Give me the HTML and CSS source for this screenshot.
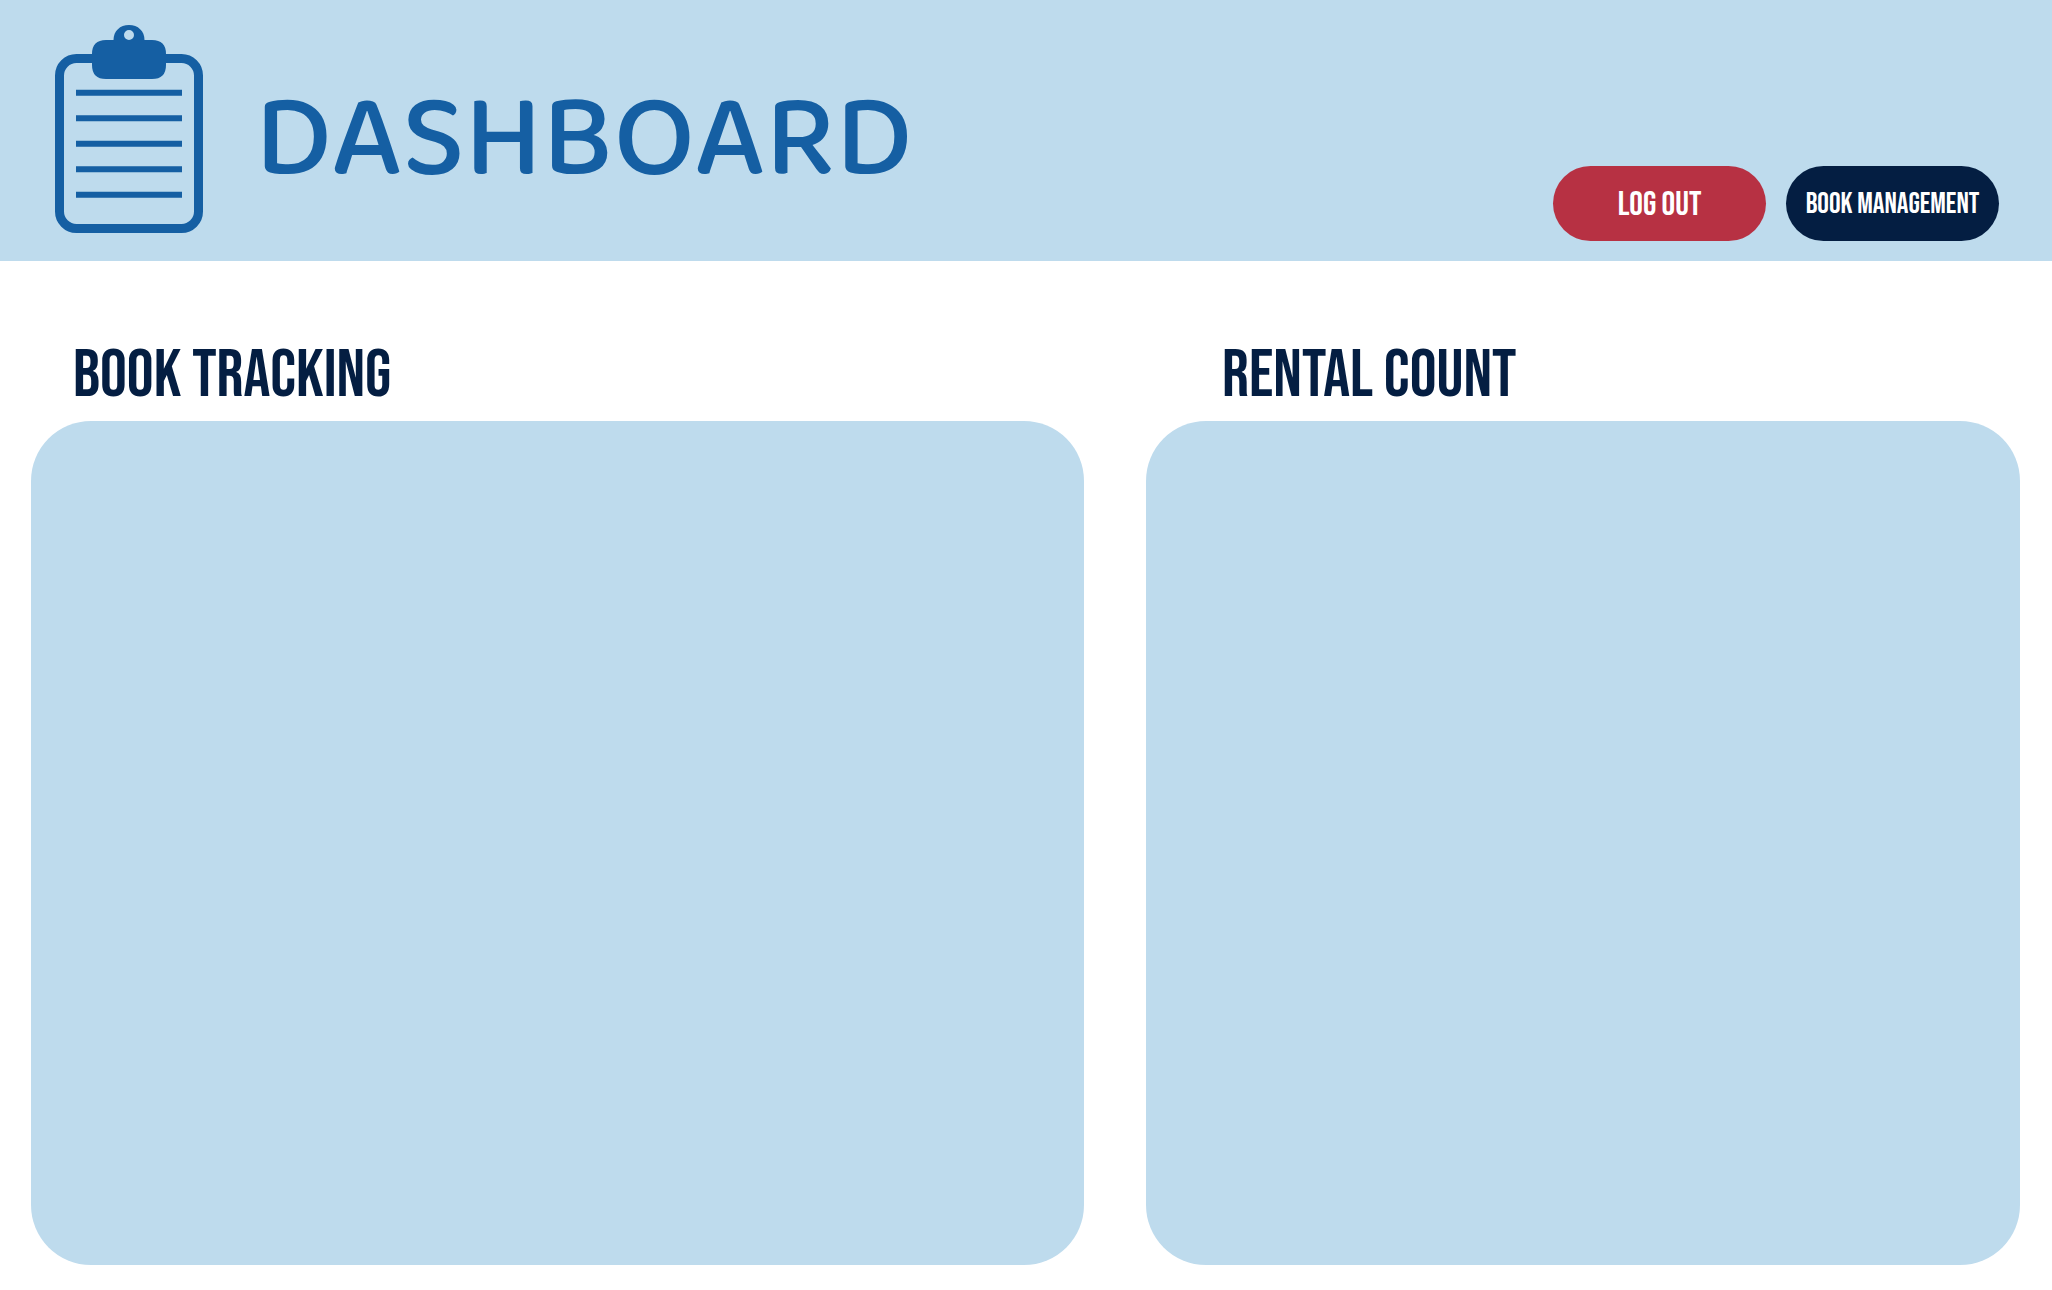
FILE: index.html
```html
<!DOCTYPE html>
<html lang="en">
<head>
  <meta charset="utf-8">
  <meta name="viewport" content="width=device-width, initial-scale=1">
  <title>Dashboard</title>
  <link rel="stylesheet" href="styles.css">
</head>
<body>
  <header class="header">
    <svg class="logo" viewBox="0 0 148 208" aria-hidden="true">
      <rect class="logo-board" x="4.500" y="33.500" width="139" height="170" rx="17"/>
      <path class="logo-clip" fill-rule="evenodd" d="M58.500 15C58.500 6 65 0 74 0S89.500 6 89.500 15H97Q111 15 111 29V40Q111 54 97 54H51Q37 54 37 40V29Q37 15 51 15ZM74 5A5 5 0 1 0 74 15A5 5 0 1 0 74 5Z"/>
      <path class="logo-lines" d="M21 67.700H127M21 93.200H127M21 118.700H127M21 144.200H127M21 169.700H127"/>
    </svg>
    <h1 class="title">DASHBOARD</h1>
    <nav class="actions">
      <button class="button button-logout" type="button">LOG OUT</button>
      <button class="button button-books" type="button">BOOK MANAGEMENT</button>
    </nav>
  </header>
  <main class="content">
    <section class="section" aria-labelledby="tracking">
      <h2 class="heading" id="tracking">BOOK TRACKING</h2>
      <div class="panel"></div>
    </section>
    <section class="section" aria-labelledby="rental">
      <h2 class="heading heading-rental" id="rental">RENTAL COUNT</h2>
      <div class="panel"></div>
    </section>
  </main>
</body>
</html>
```
FILE: styles.css
```css
* {
  box-sizing: border-box;
}

body {
  display: flex;
  flex-direction: column;
  min-height: 100vh;
  margin: 0;
  background: #fff;
  color: #041e42;
  font-family: "Bebas Neue", "Open Sans", sans-serif;
}

.header {
  display: flex;
  align-items: flex-start;
  padding: 25px 53px 20px 55px;
  background: #bedbed;
}

.logo {
  flex: none;
  width: 148px;
  height: 208px;
  margin-bottom: 8px;
}

.logo-board {
  fill: none;
  stroke: #155fa3;
  stroke-width: 9;
}

.logo-clip {
  fill: #155fa3;
}

.logo-lines {
  fill: none;
  stroke: #155fa3;
  stroke-width: 6;
}

.title {
  margin: 56px 0 0 52px;
  color: #155fa3;
  font: 500 118px/120px "Baloo 2", Lato, sans-serif;
}

.actions {
  display: flex;
  align-self: flex-end;
  gap: 20px;
  margin-left: auto;
}

.button {
  width: 213px;
  height: 75px;
  padding: 2px 0 0;
  border: 0;
  border-radius: 38px;
  color: #fff;
  font-family: inherit;
  font-weight: 400;
  white-space: nowrap;
}

.button-logout {
  background: #b73143;
  font-size: 34px;
}

.button-books {
  background: #041e42;
  font-size: 29px;
}

.content {
  display: grid;
  flex: 1;
  grid-template-columns: 1053fr 874fr;
  gap: 62px;
  padding: 75px 32px 25px 31px;
}

.section {
  display: flex;
  flex-direction: column;
}

.heading {
  margin: 0 0 5px;
  padding: 0 42px;
  font-size: 67px;
  font-weight: 400;
  line-height: 80px;
}

.heading-rental {
  padding: 0 76px;
}

.panel {
  flex: 1;
  border-radius: 60px;
  background: #bedbed;
}
```
